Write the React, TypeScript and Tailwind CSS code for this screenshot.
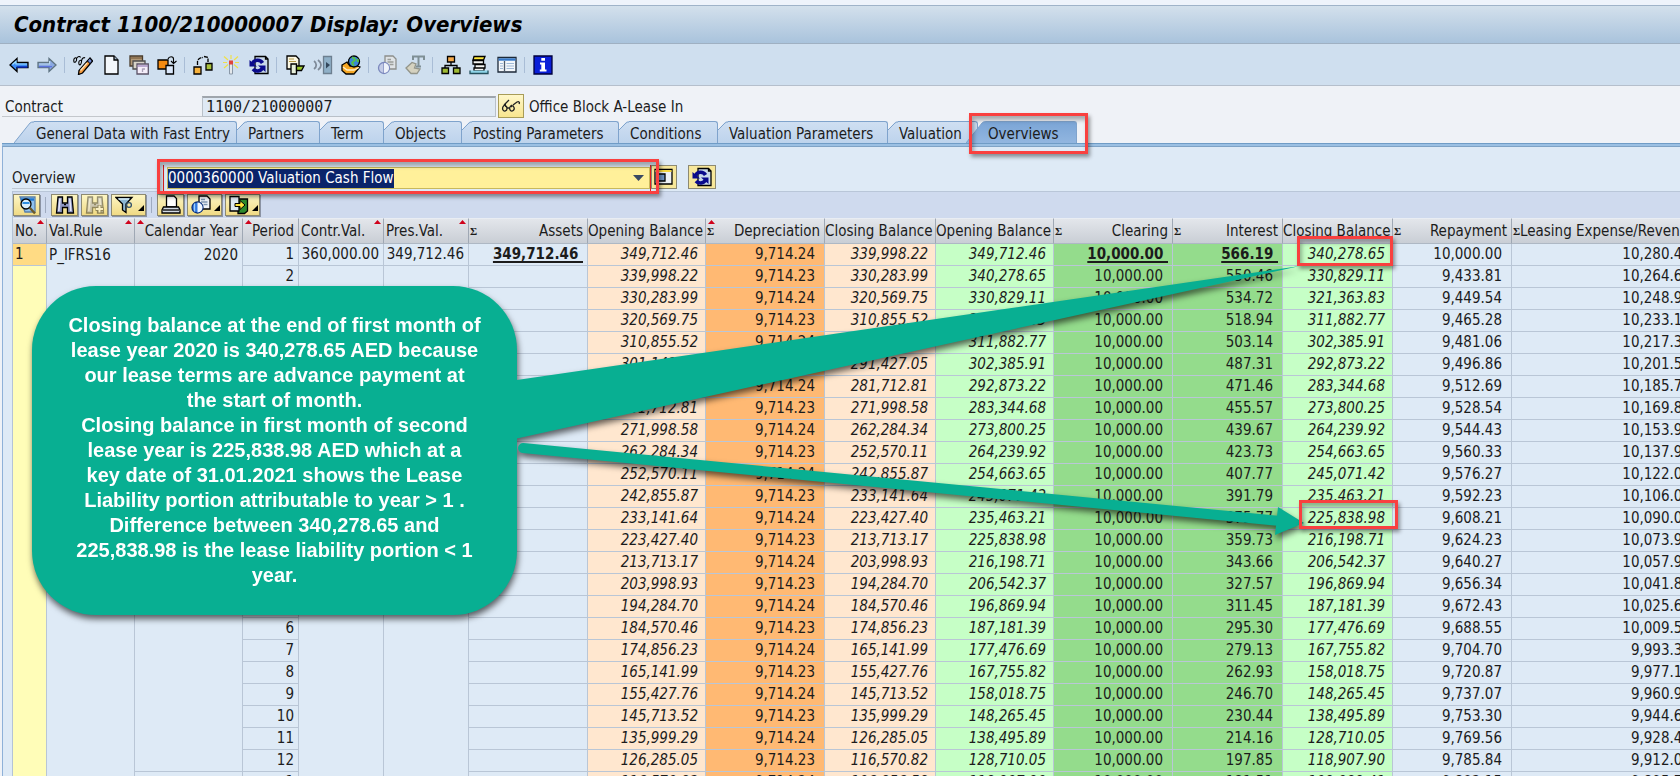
import { useState } from 'react';
import type { ReactNode } from 'react';

const interest = [
  566.19, 550.46, 534.72, 518.94, 503.14, 487.31, 471.46, 455.57, 439.67, 423.73, 407.77, 391.79, 375.77,
  359.73, 343.66, 327.57, 311.45, 295.3, 279.13, 262.93, 246.7, 230.44, 214.16, 197.85, 181.51,
];

const assetClosing = [
  339998.22, 330283.99, 320569.75, 310855.52, 301141.28, 291427.05, 281712.81, 271998.58, 262284.34,
  252570.11, 242855.87, 233141.64, 223427.4, 213713.17, 203998.93, 194284.7, 184570.46, 174856.23,
  165141.99, 155427.76, 145713.52, 135999.29, 126285.05, 116570.82, 106856.58,
];

const leaseClosing = [
  340278.65, 330829.11, 321363.83, 311882.77, 302385.91, 292873.22, 283344.68, 273800.25, 264239.92,
  254663.65, 245071.42, 235463.21, 225838.98, 216198.71, 206542.37, 196869.94, 187181.39, 177476.69,
  167755.82, 158018.75, 148265.45, 138495.89, 128710.05, 118907.9, 109089.41,
];

const START_VALUE = 349712.46;
const INSTALMENT = 10000;

const rows = interest.map((int, i) => {
  const depreciation = i % 2 === 0 ? 9714.24 : 9714.23;
  return {
    year: 2020 + Math.floor(i / 12),
    period: (i % 12) + 1,
    assetOpening: i === 0 ? START_VALUE : assetClosing[i - 1],
    depreciation,
    assetClosing: assetClosing[i],
    leaseOpening: i === 0 ? START_VALUE : leaseClosing[i - 1],
    interest: int,
    leaseClosing: leaseClosing[i],
    // paid in advance, so the interest share is the one of the period before
    repayment: i === 0 ? INSTALMENT : INSTALMENT - interest[i - 1],
    expense: depreciation + int,
  };
});

const fmt = (n: number) => n.toLocaleString('en-US', { minimumFractionDigits: 2, maximumFractionDigits: 2 });

const tabs = [
  { label: 'General Data with Fast Entry', width: 'w-[223px]' },
  { label: 'Partners', width: 'w-[83px]' },
  { label: 'Term', width: 'w-[64px]' },
  { label: 'Objects', width: 'w-[78px]' },
  { label: 'Posting Parameters', width: 'w-[157px]' },
  { label: 'Conditions', width: 'w-[99px]' },
  { label: 'Valuation Parameters', width: 'w-[170px]' },
  { label: 'Valuation', width: 'w-[90px]' },
  { label: 'Overviews', width: 'w-[111px]' },
];

type Column = { title: string; width: string; align?: 'left'; sum?: boolean; mark?: 'left' | 'right' };

const columns: Column[] = [
  { title: 'No.', width: 'w-[34px]', align: 'left', mark: 'right' },
  { title: 'Val.Rule', width: 'w-[88px]', align: 'left', mark: 'right' },
  { title: 'Calendar Year', width: 'w-[108px]', mark: 'left' },
  { title: 'Period', width: 'w-[56px]', mark: 'left' },
  { title: 'Contr.Val.', width: 'w-[85px]', align: 'left', mark: 'right' },
  { title: 'Pres.Val.', width: 'w-[85px]', align: 'left', mark: 'right' },
  { title: 'Assets', width: 'w-[119px]', sum: true },
  { title: 'Opening Balance', width: 'w-[118px]' },
  { title: 'Depreciation', width: 'w-[119px]', sum: true, mark: 'left' },
  { title: 'Closing Balance', width: 'w-[111px]' },
  { title: 'Opening Balance', width: 'w-[118px]' },
  { title: 'Clearing', width: 'w-[119px]', sum: true },
  { title: 'Interest', width: 'w-[110px]', sum: true },
  { title: 'Closing Balance', width: 'w-[110px]' },
  { title: 'Repayment', width: 'w-[119px]', sum: true },
  { title: 'Leasing Expense/Revenue', width: 'w-[190px]', align: 'left', sum: true },
];

function Tool({ label, children }: { label: string; children: ReactNode }) {
  return (
    <button type="button" aria-label={label} className="h-5 w-5 shrink-0">
      <svg viewBox="0 0 20 20" className="h-5 w-5" fill="none" stroke="#000" strokeWidth="1.3">
        {children}
      </svg>
    </button>
  );
}

function Divider() {
  return <span className="-ml-px h-4 w-px shrink-0 bg-[#a9bdd6]" />;
}

function GridButton({ label, menu, dim, children }: { label: string; menu?: boolean; dim?: boolean; children: ReactNode }) {
  return (
    <button
      type="button"
      aria-label={label}
      className={`flex h-[22px] shrink-0 items-center border border-[#8d8a72] bg-gradient-to-b from-[#fdf6c4] to-[#f0da84] px-[3px] shadow-[1px_1px_0_#8b93a3] ${
        menu ? 'w-[35px]' : 'w-[27px]'
      }`}
    >
      <svg viewBox="0 0 20 20" className={`h-5 w-5 shrink-0 ${dim ? 'opacity-40' : ''}`} fill="none" stroke="#000" strokeWidth="1.3">
        {children}
      </svg>
      {menu && (
        <svg viewBox="0 0 6 6" className="mb-1 ml-[3px] h-[6px] w-[6px] shrink-0 self-end">
          <path d="M6 0V6H0Z" fill="#000" />
        </svg>
      )}
    </button>
  );
}

function RefreshShape() {
  return (
    <>
      <path d="M6 1.5H16.5L19 4V18.5H6Z" fill="#c9d9ea" />
      <path d="M16.5 1.5V4H19" />
      <path d="M3.5 8.5A5.5 5 0 0 1 13.5 8M13.5 13A5.5 5 0 0 1 4 14" stroke="#0a0a8c" strokeWidth="3.6" />
      <path d="M0.5 5V11.5H8Z M16.5 17V10.5H9Z" fill="#0a0a8c" stroke="none" />
    </>
  );
}

function BinocularShape() {
  return (
    <>
      <path d="M3 2H7.5V8H12.5V2H17L18.5 18H12.5V12.5H7.5V18H1.5Z" fill="#8f97c4" />
      <path d="M5 3.5L3.8 16M14.8 3.5L15.8 16" stroke="#e6e8fa" strokeWidth="1.6" />
      <path d="M9 9.5H11" />
    </>
  );
}

function MainToolbar() {
  return (
    <div className="flex h-[42px] shrink-0 items-center gap-2 border-b border-[#b5bfcc] bg-[#cfdfef] pl-[9px]">
      <Tool label="Back">
        <path d="M1 10L8 3.5V7.5H19V12.5H8V16.5Z" fill="#3d8cf5" />
        <path d="M3.5 9.5L7 6.3V9H18" stroke="#9fe0ff" strokeWidth="1.2" />
        <path d="M8 12H18.5" stroke="#0a30d0" strokeWidth="1.4" />
      </Tool>
      <Tool label="Forward">
        <path d="M19 10L12 3.5V7.5H1V12.5H12V16.5Z" fill="#8aa8e0" stroke="#5f7482" />
        <path d="M2 9H12.6V6" stroke="#bcd9ee" strokeWidth="1.2" />
        <path d="M2 11.7H15" stroke="#5a6fe0" strokeWidth="1.2" />
      </Tool>
      <Divider />
      <Tool label="Display/Change">
        <path d="M1 7C0 3 3 1.5 3.5 4S1.5 8 1 7ZM6 9C5 5 9 4 8.5 7S6.5 10.5 6 9ZM3.5 3.5C5 1 7 1 7.5 2.5M8.5 6C9 3 11 2 12 3" strokeWidth="1.1" />
        <path d="M17 3L19.5 6L9.5 18L5.5 19.5L6 15.5Z" fill="#f59a3c" />
        <path d="M16.8 3.2L19.3 6L17 8.7L14.5 5.9Z" fill="#6d8ad6" strokeWidth="1" />
        <path d="M7.5 15.5L14 8" stroke="#ffe3b8" strokeWidth="1.4" />
      </Tool>
      <Tool label="Create">
        <path d="M4 1H13L17 5V19H4Z" fill="#f3f7fb" />
        <path d="M13 1V5H17" fill="#9fb4c9" />
      </Tool>
      <Tool label="Copy">
        <path d="M1 1H13.5V11H1Z" fill="#b39a78" stroke="#4a3c2c" />
        <path d="M1.5 3H13" stroke="#7d6242" />
        <path d="M4 6H16V14H4Z" fill="#d8d4c8" stroke="#4d4d4d" />
        <path d="M8 9H19.3V19H8Z" fill="#f5eefa" stroke="#5c5468" />
        <path d="M8.5 11H19" stroke="#9a83b8" />
        <path d="M13.5 13.5V17M13.5 14H16" stroke="#a8a0b5" />
      </Tool>
      <Tool label="Change object">
        <path d="M1 5H11V14H1Z" fill="#f28a12" />
        <path d="M9 10.5H16.5V19H9Z" fill="#dbe8fb" />
        <path d="M11 4C12 1 16.5 1 16.5 4V8M14 6L16.5 8.5L19.5 6" strokeWidth="1.1" />
      </Tool>
      <Divider />
      <Tool label="Convert">
        <path d="M1 12H8V19H1Z" fill="#f7b23c" />
        <path d="M13 8.5H19V15H13Z" fill="#a9c13c" />
        <path d="M4.5 10V6.5C5 3.5 8 2.5 10 2.5M11 1.5L15 2.5V7" strokeDasharray="4 1" />
      </Tool>
      <Tool label="Activate">
        <path d="M8.5 8H11.5V19H8.5Z" fill="#e4e8ec" stroke="#8a98a8" strokeWidth="1" />
        <rect x="8" y="5.5" width="4" height="4" fill="#e0453c" stroke="none" />
        <path d="M10 0V4M3 1.5L7 5M17 1.5L13 5M3 13L7 9.5M17 13L13 9.5M2 7.5H6M14 7.5H18" stroke="#efe04a" strokeWidth="1.2" />
      </Tool>
      <Tool label="Refresh">
        <RefreshShape />
      </Tool>
      <Divider />
      <Tool label="Posting document">
        <path d="M2 1H11L14 4V14H2Z" fill="#fbf7e2" />
        <path d="M4 4H9M4 6.5H11" stroke="#b59a4a" strokeWidth="1" />
        <path d="M6 9H11.5V19H6Z" fill="#e8f0dc" />
        <path d="M11.5 11H19L16.5 15.5H11.5Z" fill="#9cc82c" />
      </Tool>
      <Tool label="Simulate">
        <path d="M1 6C4 8 4 12 1 14M5 5C9 8 9 12 5 15" stroke="#7f8a98" strokeWidth="1.8" />
        <path d="M10.5 1.5H18.5V18.5H10.5Z" fill="#8fb0c8" stroke="#6d7f90" />
        <path d="M13 7L17 10L13 13.5Z" fill="#33475c" stroke="none" />
      </Tool>
      <Tool label="World">
        <path d="M1 10L6 7L9 11H16L19 12L13 19H5L1 15.5Z" fill="#f5a623" />
        <path d="M2 12L6 15H13L18 12.5" stroke="#fff0c8" />
        <circle cx="13" cy="6.5" r="5.5" fill="#3a86d8" />
        <path d="M11 2.5C14 3 15 5 12.5 6.5S11.5 9 13 10.5M16.5 4L17 7" stroke="#57c046" strokeWidth="2" />
      </Tool>
      <Divider />
      <Tool label="Document info">
        <path d="M8 1H16L19 4V14H8Z" fill="#dfe3e6" stroke="#8d8f8c" />
        <path d="M10.5 4.5H14M10.5 7H16.5M12.5 9.5H16.5" stroke="#9b9d99" />
        <circle cx="7" cy="13" r="5.5" fill="#c3cbe6" stroke="#7b88bd" />
        <path d="M7 7.5V18.5" stroke="#7b88bd" />
        <path d="M7 8A5 5 0 0 1 7 18Z" fill="#eef2fa" stroke="none" />
      </Tool>
      <Tool label="Texts">
        <path d="M8 5V1.5H19V5M13.5 1.5V11M11 11.5H16" stroke="#7f8f95" strokeWidth="2" />
        <path d="M1 13L7 7.5L11 9L9.5 13L15 14L12 18.5H6Z" fill="#d5d2c0" stroke="#93958a" />
      </Tool>
      <Divider />
      <Tool label="Hierarchy">
        <path d="M10 7V10.5M4 13V10.5H16V13" />
        <path d="M6.5 1.5H13.5V7H6.5Z" fill="#f5a94a" />
        <path d="M1 13H7.5V18.5H1ZM12.5 13H19V18.5H12.5Z" fill="#9fba34" />
      </Tool>
      <Tool label="Stack">
        <path d="M5 1.5H16L14.5 5H4Z" fill="#ffe83a" />
        <path d="M4 5.5H14.5V9H4ZM6 9.5H16V13H6ZM5 13H15V16H5Z" fill="#f5f5f2" />
        <path d="M1 15.5V18.5H19V15.5" fill="#8fd6ea" stroke="#24505e" />
      </Tool>
      <Tool label="Layout">
        <path d="M1 2.5H19V17H1Z" fill="#f3f7fb" stroke="#1c2938" />
        <path d="M1.5 4.5H18.5" stroke="#3477c8" strokeWidth="2.4" />
        <path d="M7.5 6V16.5" stroke="#4c5a6c" />
        <path d="M3 8.5H6M3 11H6M3 13.5H6M9.5 8.5H17M9.5 11H17M9.5 13.5H17" stroke="#9fb8d6" strokeWidth="1" />
      </Tool>
      <Divider />
      <Tool label="Information">
        <path d="M1 1H19V19H1Z" fill="#0a1fd8" stroke="#00003c" />
        <path d="M8.3 3H12V5.8H8.3ZM7 7.5H12V14.5H13.5V16.5H6.8V14.5H8.3V9.5H7Z" fill="#fff" stroke="none" />
      </Tool>
    </div>
  );
}

function TabStrip({ active, onSelect }: { active: string; onSelect: (label: string) => void }) {
  return (
    <div role="tablist" className="flex h-[22px] shrink-0 pl-[14px]">
      {tabs.map((tab, i) => {
        const on = tab.label === active;
        const wide = i === 0 || i === tabs.length - 1;
        return (
          <button
            key={tab.label}
            type="button"
            role="tab"
            aria-selected={on}
            onClick={() => onSelect(tab.label)}
            className={`flex h-[22px] shrink-0 whitespace-nowrap ${tab.width} ${i === tabs.length - 1 ? '-ml-3' : ''}`}
          >
            <svg viewBox={wide ? '0 0 20 22' : '0 0 10 22'} className={`h-[22px] shrink-0 ${wide ? 'w-5' : 'w-[10px]'}`} fill="none">
              <defs>
                <linearGradient id={`slant${i}`} x1="0" y1="0" x2="0" y2="1">
                  <stop offset="0" stopColor={on ? '#7ba5d6' : '#cfdff2'} />
                  <stop offset="1" stopColor={on ? '#92b6e0' : '#bdd3ec'} />
                </linearGradient>
              </defs>
              {wide ? (
                <>
                  <path d="M0 22L16 2Q17 0 20 0V22Z" fill={`url(#slant${i})`} />
                  <path d="M0 22L16 2Q17 1 20 1" stroke="#7fa3cc" />
                </>
              ) : (
                <>
                  <path d="M0 22V9L7 1Q8 0 10 0V22Z" fill={`url(#slant${i})`} />
                  <path d="M0 9L7 2Q8 1 10 1" stroke="#7fa3cc" />
                </>
              )}
            </svg>
            <span
              className={`h-full flex-1 rounded-tr-[3px] border-t border-r border-[#7fa3cc] bg-gradient-to-b text-left leading-[24px] ${
                wide ? 'pl-[2px]' : 'pl-px'
              } ${on ? 'from-[#7ba5d6] to-[#92b6e0]' : 'from-[#cfdff2] to-[#bdd3ec]'}`}
            >
              {tab.label}
            </span>
          </button>
        );
      })}
    </div>
  );
}

function GridToolbar() {
  return (
    <div className="flex h-[27px] shrink-0 items-center border-t border-[#b9c6d8] bg-[#cfdaee]">
      <GridButton label="Details">
        <path d="M3 2H18V17H8Z" fill="#8fc1ee" stroke="#5a7fa8" />
        <path d="M4 4.5H17" stroke="#1f77d0" strokeWidth="2.4" />
        <circle cx="9" cy="9" r="5" fill="#d8eefc" />
        <path d="M5.5 8H12.5" stroke="#2f8fe0" strokeWidth="2" />
        <path d="M12.5 12.5L18 18.5" stroke="#6b5a2c" strokeWidth="2.4" />
      </GridButton>
      <span className="mx-[5px] h-4 w-px bg-[#9fabc0]" />
      <div className="flex items-center gap-[3px]">
        <GridButton label="Find">
          <BinocularShape />
        </GridButton>
        <GridButton label="Find next" dim>
          <BinocularShape />
          <path d="M14.5 10V18M10.5 14H18.5" strokeWidth="4" />
          <path d="M14.5 10.5V17.5M11 14H18" stroke="#fff" strokeWidth="2" />
        </GridButton>
        <GridButton label="Filter" menu>
          <path d="M1 2.5H17L11 9V17.5L7.5 15V9Z" fill="#8db8d4" />
          <path d="M3.5 4H14" stroke="#e0f1fa" strokeWidth="1.4" />
          <circle cx="14" cy="10" r="2.4" stroke="#33526c" />
        </GridButton>
      </div>
      <span className="mx-[5px] h-4 w-px bg-[#9fabc0]" />
      <div className="flex items-center gap-[3px]">
        <GridButton label="Print">
          <path d="M5.5 1H13L15.5 3.5V12H5.5Z" fill="#fff" />
          <path d="M2.5 12H17.5L19 15V18H1V15Z" fill="#d3dbe4" />
          <path d="M2 15H18" />
        </GridButton>
        <GridButton label="Views" menu>
          <path d="M8 1H16L19 4V14H8Z" fill="#f0f4f8" />
          <path d="M10 4.5H14M10 7H16.5M12.5 9.5H16.5" stroke="#7f97b2" />
          <circle cx="6.5" cy="12.5" r="5.5" fill="#2f78e0" stroke="#0c2f7a" />
          <path d="M6.5 7.5A5 5 0 0 1 6.5 17.5Z" fill="#f1f7fd" stroke="none" />
          <path d="M3.5 8.5V16.5" stroke="#9fd0ff" />
        </GridButton>
        <GridButton label="Export" menu>
          <path d="M9 4H18.5V16L15.5 18.5H9Z" fill="#2c8a2c" />
          <path d="M1 1.5H10V16H1Z" fill="#dfe8f3" />
          <path d="M6 8.5H11V5.5L16 10L11 14.5V11.5H6Z" fill="#ffe23a" strokeWidth="1" />
        </GridButton>
      </div>
    </div>
  );
}

function CashFlowGrid() {
  const line = 'border-r border-b border-[#b9c6d6]';
  return (
    <table className="w-[1689px] table-fixed border-separate border-spacing-0 whitespace-nowrap">
      <thead>
        <tr className="h-[26px]">
          {columns.map((col, i) => (
            <th
              key={i}
              className={`relative border-t border-r border-b border-t-[#e9edf3] border-r-[#9fa8b4] border-b-[#aeb8c4] bg-gradient-to-b from-[#e3e6eb] to-[#c9ced5] p-0 font-normal leading-[24px] ${col.width} ${
                col.align === 'left' ? 'pl-[2px] text-left' : 'pr-1 text-right'
              }`}
            >
              {col.mark && (
                <svg viewBox="0 0 7 4" className={`absolute top-px h-1 w-[7px] ${col.mark === 'left' ? 'left-[2px]' : 'right-[2px]'}`}>
                  <path d="M0 4L3.5 0L7 4Z" fill="#d0021b" />
                </svg>
              )}
              {col.sum && (
                <span className="absolute left-px top-0 font-['Liberation_Serif'] text-[11px] font-bold">Σ</span>
              )}
              <span className={col.sum && col.align === 'left' ? 'pl-[6px]' : ''}>{col.title}</span>
            </th>
          ))}
        </tr>
      </thead>
      <tbody className="leading-[21px]">
        {rows.map((r, i) => {
          const first = i === 0;
          const yearEnd = r.period === 12;
          return (
            <tr key={i} className="h-[22px]">
              <td className={`border-r border-[#b9c6d6] p-0 pl-[2px] ${first ? 'border-b bg-[#ffdb84]' : 'bg-[#fffdb8]'}`}>{first ? 1 : ''}</td>
              <td className="border-r border-[#b9c6d6] p-0 pl-[2px]">{first ? 'P_IFRS16' : ''}</td>
              <td className={`border-r border-[#b9c6d6] p-0 pr-1 text-right ${yearEnd ? 'border-b' : ''}`}>{r.period === 1 ? r.year : ''}</td>
              <td className={`p-0 pr-1 text-right ${line}`}>{r.period}</td>
              <td className={`border-r border-[#b9c6d6] p-0 pr-1 text-right ${first ? 'border-b' : ''}`}>{first ? '360,000.00' : ''}</td>
              <td className={`border-r border-[#b9c6d6] p-0 pr-1 text-right ${first ? 'border-b' : ''}`}>{first ? fmt(START_VALUE) : ''}</td>
              <td className={`p-0 pr-1 text-right font-bold ${line}`}>
                {first && <span className="whitespace-pre underline decoration-2 underline-offset-2">{fmt(START_VALUE) + ' '}</span>}
              </td>
              <td className={`bg-[#ffe7cf] p-0 pr-[7px] text-right italic ${line}`}>{fmt(r.assetOpening)}</td>
              <td className={`bg-[#ffb973] p-0 pr-[9px] text-right ${line}`}>{fmt(r.depreciation)}</td>
              <td className={`bg-[#ffe7cf] p-0 pr-[7px] text-right italic ${line}`}>{fmt(r.assetClosing)}</td>
              <td className={`bg-[#c6ffc6] p-0 pr-[7px] text-right italic ${line}`}>{fmt(r.leaseOpening)}</td>
              <td className={`bg-[#94dc8c] p-0 text-right ${line} ${first ? 'pr-1 font-bold' : 'pr-[9px]'}`}>
                {first ? (
                  <span className="whitespace-pre underline decoration-2 underline-offset-2">{fmt(INSTALMENT) + ' '}</span>
                ) : (
                  fmt(INSTALMENT)
                )}
              </td>
              <td className={`bg-[#94dc8c] p-0 text-right ${line} ${first ? 'pr-1 font-bold' : 'pr-[9px]'}`}>
                {first ? (
                  <span className="whitespace-pre underline decoration-2 underline-offset-2">{fmt(r.interest) + ' '}</span>
                ) : (
                  fmt(r.interest)
                )}
              </td>
              <td className={`bg-[#c6ffc6] p-0 pr-[7px] text-right italic ${line}`}>{fmt(r.leaseClosing)}</td>
              <td className={`p-0 pr-[9px] text-right ${line}`}>{fmt(r.repayment)}</td>
              <td className={`p-0 pr-[10px] text-right ${line}`}>{fmt(r.expense)}</td>
            </tr>
          );
        })}
      </tbody>
    </table>
  );
}

const frame = 'pointer-events-none absolute border-[3px] border-[#f9403f] shadow-[2px_3px_4px_rgba(0,0,0,0.4),inset_2px_4px_4px_rgba(0,0,0,0.3)]';

// Callout and arrows float above the grid and share one shadow
function Annotations() {
  return (
    <>
      <div className="pointer-events-none absolute inset-0 drop-shadow-[1px_4px_3px_rgba(0,0,0,0.6)]">
        <svg className="absolute left-0 top-0 h-[776px] w-[1680px]" viewBox="0 0 1680 776">
          <path d="M510 381L1300 266L510 440Z" fill="#08af92" />
          <path d="M523 448L1280 521" stroke="#08af92" strokeWidth="10" strokeLinecap="round" />
          <path d="M1278 507L1304 523L1275 535Z" fill="#08af92" />
        </svg>
        <div className="absolute left-8 top-[286px] flex h-[329px] w-[485px] items-center justify-center rounded-[64px] bg-[#08af92] text-center font-['Liberation_Sans'] text-[20px] font-bold leading-[25px] text-white">
          <p>
            Closing balance at the end of first month of
            <br />
            lease year 2020 is 340,278.65 AED because
            <br />
            our lease terms are advance payment at
            <br />
            the start of month.
            <br />
            Closing balance in first month of second
            <br />
            lease year is 225,838.98 AED which at a
            <br />
            key date of 31.01.2021 shows the Lease
            <br />
            Liability portion attributable to year &gt; 1 .
            <br />
            Difference between 340,278.65 and
            <br />
            225,838.98 is the lease liability portion &lt; 1
            <br />
            year.
          </p>
        </div>
      </div>
      <div className={`left-[969px] top-[113px] h-[41px] w-[119px] ${frame}`} />
      <div className={`left-[157px] top-[159px] h-[35px] w-[502px] ${frame}`} />
      <div className={`left-[1297px] top-[236px] h-[30px] w-[96px] ${frame}`} />
      <div className={`left-[1299px] top-[500px] h-[29px] w-[99px] ${frame}`} />
    </>
  );
}

export default function App() {
  const [activeTab, setActiveTab] = useState('Overviews');
  const [overview, setOverview] = useState('cashflow');

  return (
    <div className="relative flex h-screen flex-col overflow-hidden bg-[#eff2f7] font-['DejaVu_Sans_Condensed','DejaVu_Sans',sans-serif] text-[15px] text-[#1c1c1c]">
      <div className="h-[5px] shrink-0 bg-[#eef3fb]" />
      <header className="flex h-[39px] shrink-0 items-center border-t border-b border-t-[#9fb3c9] border-b-[#9fb0c2] bg-gradient-to-b from-[#d3e0ec] to-[#a9c3dc] pl-[14px]">
        <h1 className="text-[22px] font-bold italic text-black">Contract 1100/210000007 Display: Overviews</h1>
      </header>

      <MainToolbar />

      <div className="flex h-[35px] shrink-0 items-start pl-[2px] pt-2">
        <label htmlFor="contract" className="mt-[2px] h-[21px] w-[200px] border-b border-[#c3c7cc] pl-[3px] leading-[22px]">
          Contract
        </label>
        <input
          id="contract"
          readOnly
          value="1100/210000007"
          className="mt-[2px] h-[21px] w-[294px] border border-t-2 border-[#b9c0c8] border-t-[#9fa5ac] bg-[#dfe9f4] pl-[3px] font-['DejaVu_Sans_Mono'] text-[15px] outline-none"
        />
        <button
          type="button"
          aria-label="Display contract"
          className="ml-[2px] flex h-6 w-[26px] items-center justify-center border border-[#a89c58] bg-gradient-to-b from-[#fff7c9] to-[#f8e58f]"
        >
          <svg viewBox="0 0 20 20" className="h-5 w-5" fill="none" stroke="#222" strokeWidth="1.3">
            <path d="M5 9C2 9 1 12 2 14S6 15 6 12.5S5 10 4 10M11 9C8.5 10 8 13 9.5 14.5S14 14 13 11.5S11 10 10 11M6.5 12L8.5 12M3 9L8 4M12 9L16 6C18 5 19 6.5 18 8" />
          </svg>
        </button>
        <span className="ml-[5px] mt-[2px] leading-[22px]">Office Block A-Lease In</span>
      </div>

      <TabStrip active={activeTab} onSelect={setActiveTab} />
      <div className="ml-[2px] h-1 shrink-0 border-t border-b border-t-[#6f9cc6] border-b-[#7fa3c6] bg-[#9bc0e3]" />

      <main className="ml-[2px] flex min-h-0 flex-1 flex-col overflow-hidden border-l border-[#8fb1d8] bg-[#deeaf6] pl-[9px]">
        <div className="flex h-[44px] shrink-0 items-start pt-[18px]">
          <label htmlFor="overview" className="mt-px h-[23px] w-[146px] border-b border-[#bfc8d3] leading-[25px]">
            Overview
          </label>
          <div className="ml-[5px] flex h-[26px] w-[488px] items-center border-x border-[#e02020] py-[2px] pl-[3px]">
            <div className="flex h-[22px] flex-1 items-center justify-between border border-[#c8b85c] bg-[#fff09a] pr-[5px]">
              <select
                id="overview"
                value={overview}
                onChange={(e) => setOverview(e.target.value)}
                className="h-[19px] appearance-none bg-[#0a246a] leading-[19px] text-white outline-none [field-sizing:content]"
              >
                <option value="cashflow">0000360000 Valuation Cash Flow</option>
              </select>
              <svg viewBox="0 0 11 6" className="h-[6px] w-[11px]">
                <path d="M0 0H11L5.5 6Z" fill="#3a4a63" />
              </svg>
            </div>
          </div>
          <button type="button" aria-label="Settings" className="h-6 w-[26px] border border-[#8d8a72] bg-[#f7e79a] pl-[2px]">
            <svg viewBox="0 0 20 20" className="h-5 w-5" fill="none" stroke="#000" strokeWidth="1.3">
              <path d="M1 2.5H18V17H1Z" fill="#eef1f6" />
              <path d="M1.5 4H17.5" stroke="#f5d742" strokeWidth="2" />
              <path d="M3 7H11V14H3Z" fill="#6f93c4" />
            </svg>
          </button>
          <button type="button" aria-label="Refresh overview" className="ml-[11px] h-6 w-7 border border-[#8d8a72] bg-[#f7e79a] pl-[3px]">
            <svg viewBox="0 0 20 20" className="h-5 w-5" fill="none" stroke="#000" strokeWidth="1.3">
              <RefreshShape />
            </svg>
          </button>
        </div>

        <div className="flex min-h-0 flex-1 flex-col overflow-hidden border-l border-[#b4c3d6]">
          <GridToolbar />
          <CashFlowGrid />
        </div>
      </main>

      <Annotations />
    </div>
  );
}
